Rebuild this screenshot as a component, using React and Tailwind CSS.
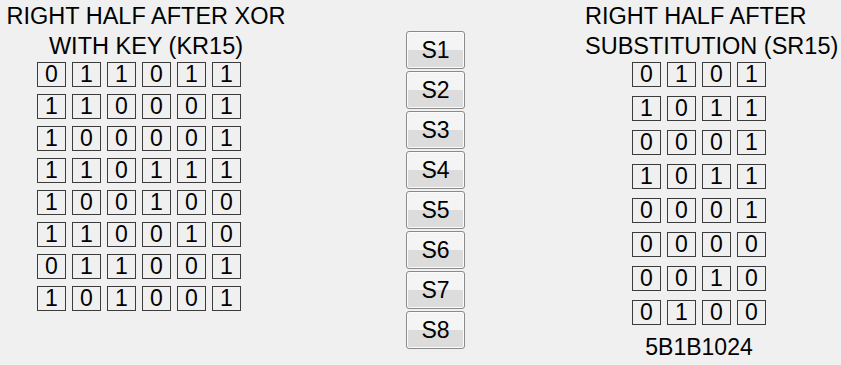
const xorBits = [
  "011011",
  "110001",
  "100001",
  "110111",
  "100100",
  "110010",
  "011001",
  "101001",
]

const subBits = [
  "0101",
  "1011",
  "0001",
  "1011",
  "0001",
  "0000",
  "0010",
  "0100",
]

const sBoxes = ["S1", "S2", "S3", "S4", "S5", "S6", "S7", "S8"]

function Cell({ bit }) {
  return (
    <div className="w-[29px] h-[25px] border border-[#3c3c3c] bg-[#f0f0f0] flex items-center justify-center text-[23px] leading-none">
      {bit}
    </div>
  )
}

function BitGrid({ rows, rowGap }) {
  return (
    <div className={`flex flex-col ${rowGap}`}>
      {rows.map((row, i) => (
        <div key={i} className="flex gap-[6px]">
          {row.split("").map((b, j) => (
            <Cell key={j} bit={b} />
          ))}
        </div>
      ))}
    </div>
  )
}

function App() {
  return (
    <div
      className="w-[841px] h-[365px] bg-[#f0f0f0] text-black flex overflow-hidden"
      style={{ fontFamily: '"Liberation Sans", Arial, sans-serif' }}
    >
      {/* left: xor with key */}
      <div className="w-[292px] pt-[1px] flex flex-col">
        <div className="text-center text-[23.5px] leading-[30px] whitespace-nowrap">
          <div>RIGHT HALF AFTER XOR</div>
          <div>WITH KEY (KR15)</div>
        </div>
        <div className="ml-[37px] mt-[1px]">
          <BitGrid rows={xorBits} rowGap="gap-[7px]" />
        </div>
      </div>

      {/* middle: s-box buttons */}
      <div className="ml-[114px] pt-[31px] flex flex-col gap-[2px]">
        {sBoxes.map((s) => (
          <button
            key={s}
            className="w-[59px] h-[38px] rounded-[3px] border border-[#8a8a8a] bg-gradient-to-b from-[#f4f4f4] from-50% to-[#dcdcdc] to-50% text-[23px] leading-none flex items-center justify-center shadow-[inset_0_0_0_1px_#fbfbfb]"
          >
            {s}
          </button>
        ))}
      </div>

      {/* right: after substitution */}
      <div className="ml-[120px] pt-[1px] flex flex-col">
        <div className="text-[23.5px] leading-[30px] whitespace-nowrap">
          <div>RIGHT HALF AFTER</div>
          <div>SUBSTITUTION (SR15)</div>
        </div>
        <div className="ml-[47px] mt-[1px] w-[134px] flex flex-col items-center">
          <BitGrid rows={subBits} rowGap="gap-[9px]" />
          <div className="mt-[11px] text-[23px] leading-none">5B1B1024</div>
        </div>
      </div>
    </div>
  )
}

export default App
